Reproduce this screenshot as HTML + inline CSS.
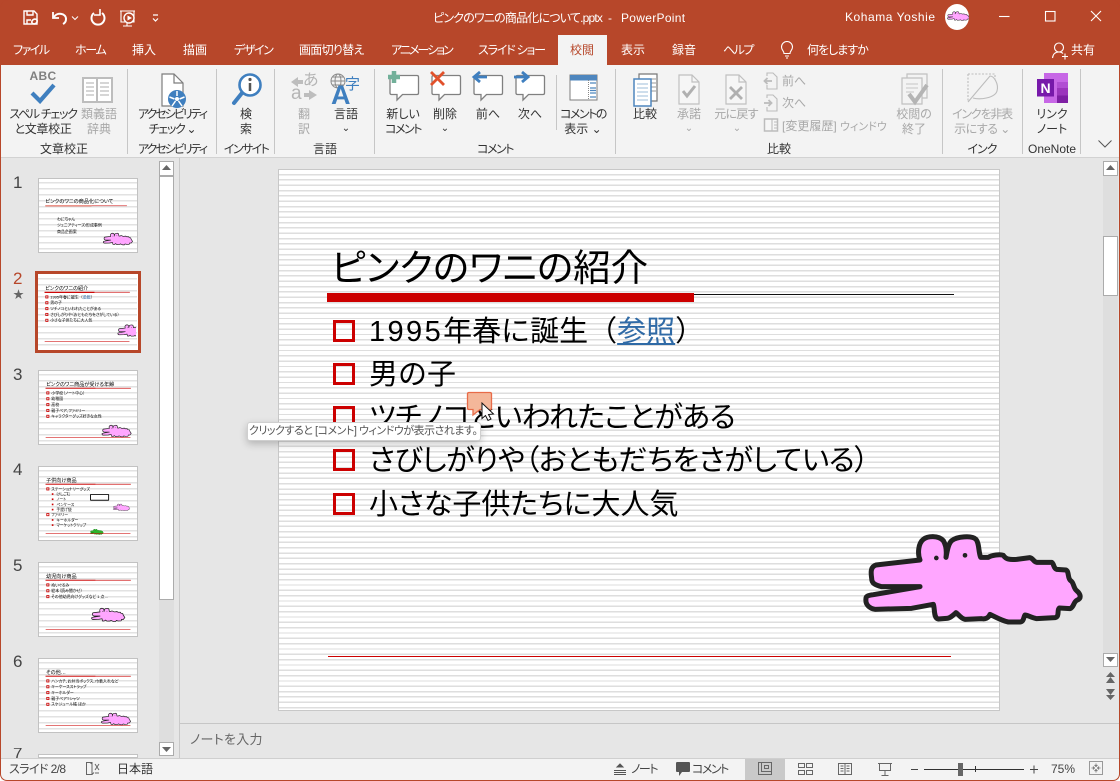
<!DOCTYPE html>
<html lang="ja"><head><meta charset="utf-8"><title>PowerPoint</title>
<style>
*{box-sizing:border-box;margin:0;padding:0}
html,body{width:1120px;height:781px;overflow:hidden;background:#fff}
body{font-family:"Liberation Sans","Noto Sans CJK JP",sans-serif;font-feature-settings:"palt";position:relative}
div,span,svg{position:absolute}
.t{white-space:nowrap;font-size:12px;line-height:14px;color:#333;transform:translateX(-50%)}
.l{white-space:nowrap;font-size:12px;line-height:14px;color:#333}
.g{color:#a8a8a8}
.w{color:#fff}
.sep{width:1px;top:69px;height:85px;background:#c6c6c6}
.sl{left:0;top:0;width:720px;height:540px;overflow:hidden;transform:scale(.1361);transform-origin:0 0;font-family:"Liberation Sans","Noto Sans CJK JP",sans-serif}
.th{left:38px;width:100px;height:75px;border:1px solid #c2c2c2;overflow:hidden;background:repeating-linear-gradient(#fff 0,#fff 3px,#e2e2e2 3px,#e2e2e2 4.5px,#fff 4.5px,#fff 6px)}
.th .b{border-width:6px}
.n{left:13px;font-size:17px;line-height:20px;color:#444}
.stripes{background:repeating-linear-gradient(#fff 0,#fff 3.9px,#dedede 3.9px,#dedede 5.33px)}
.ti{white-space:nowrap;font-size:37.500px;line-height:50px;color:#000;left:52px;margin-top:2px}
.bar{height:9px;background:#c00;left:48px;top:123px;width:367px}
.thin{height:1px;background:#111;left:415px;top:124px;width:260px}
.foot{height:1px;background:#c00;left:49px;top:486px;width:623px}
.i{white-space:nowrap;font-size:29px;line-height:40px;color:#000;left:90px;margin-top:1px}
.np{font-feature-settings:normal}
.b{left:54px;width:22px;height:22px;border:3.5px solid #c00}
.s{left:94px;width:12px;height:12px;background:#c00}
.i2{white-space:nowrap;font-size:28px;line-height:40px;color:#000;left:128px}
</style></head><body>
<svg width="0" height="0" style="position:absolute"><defs>
<path id="gp" d="M240 120C232 100 235 70 250 58C262 48 295 45 310 62C318 75 320 95 318 112C322 90 325 72 335 62C350 50 395 45 408 58C418 70 415 95 422 112L445 112C455 105 480 102 490 106C498 118 510 120 530 118L570 113C580 115 580 125 590 127L635 127C642 130 640 145 650 148L678 150C688 155 682 175 692 182C702 188 700 205 710 212C722 222 725 235 712 240C700 245 702 262 690 266L658 264C650 270 660 290 645 293L590 296C575 293 562 285 555 285C550 292 552 305 540 306L505 306C485 302 465 290 450 283C445 295 435 298 425 296L375 298C362 295 355 282 348 278C340 285 330 295 320 295L295 297C280 295 285 265 280 253L215 265L105 268C90 265 75 255 78 235C78 228 85 226 100 224L240 200L125 200C105 195 95 190 95 175C92 155 92 140 108 135Z"/>
<g id="gator"><use href="#gp" fill="#FFA6FF" stroke="#222" stroke-width="15" stroke-linejoin="round"/><circle cx="289" cy="114" r="7" fill="#222"/><circle cx="375" cy="106" r="7" fill="#222"/></g>
<g id="gr"><use href="#gp" fill="#2CB52C" stroke="#0a7a0a" stroke-width="20"/></g>
<path id="bub" d="M5.500 3.500H31C32 3.500 32.500 4 32.500 5V21C32.500 22 32 22.500 31 22.500H16.500L11 28V22.500H5.500C4.500 22.500 4 22 4 21V5C4 4 4.500 3.500 5.500 3.500Z" fill="#fff" stroke="#808080" stroke-width="1.300"/>
</defs></svg>

<!-- title + tabs -->
<div style="left:0;top:0;width:1120px;height:65px;background:#B7472A"></div>

<svg style="left:22px;top:9px" width="145" height="18" viewBox="0 0 145 18" fill="none" stroke="#fff" stroke-width="1.400">
<path d="M2 2H12L15 5V15H2Z"/><path d="M5 2V6H11V2M5 15V11H9"/><path d="M10 14a3 3 0 0 1 5-3M15 11a3 3 0 0 1-5 3" stroke-width="1.600"/>
<path d="M32 8C35 3 44 4 44 10C44 12 43 14 41 15" stroke-width="2"/><path d="M31 3V9H37" stroke-width="1.800"/>
<path d="M50 7.500l3 3 3-3" stroke-width="1"/>
<path d="M72 4A6.500 6.500 0 1 0 80 4" stroke-width="2"/><path d="M76 1V7H70" stroke-width="1.600" transform="translate(2 -1)"/>
<path d="M98 2H113M99 2V13H112V2M105 13V17M101 17H110" stroke-width="1.100"/><circle cx="107" cy="9" r="5" fill="#B7472A"/><path d="M105.500 6.500L110 9 105.500 11.500Z" fill="#fff" stroke="none"/>
<path d="M131 6H136M131 9.500L133.500 12 136 9.500" stroke-width="1.200"/>
</svg>

<div class="l w" style="left:433px;top:11px;letter-spacing:-.8px">ピンクのワニの商品化について.pptx</div>
<div class="l w" style="left:608px;top:11px">-</div>
<div class="l w" style="left:621px;top:11px;letter-spacing:.3px">PowerPoint</div>
<div class="l w" style="left:845px;top:10px;letter-spacing:.55px">Kohama Yoshie</div>
<div style="left:945px;top:4px;width:24px;height:26px;border-radius:50%;background:#fff;overflow:hidden"><svg style="left:1px;top:4px" width="24" height="16" viewBox="40 30 700 290"><use href="#gator"/></svg></div>
<svg style="left:995px;top:8px" width="115" height="18" fill="none" stroke="#fff" stroke-width="1.100"><path d="M4 8.500H14.500"/><rect x="50.500" y="3.500" width="9.500" height="9.500"/><path d="M96 3L106 13M106 3L96 13"/></svg>

<div class="l w" style="left:13px;top:43px;letter-spacing:-1.500px">ファイル</div>
<div class="l w" style="left:75px;top:43px;letter-spacing:-1.300px">ホーム</div>
<div class="l w" style="left:132px;top:43px">挿入</div>
<div class="l w" style="left:183px;top:43px">描画</div>
<div class="l w" style="left:234px;top:43px;letter-spacing:-1.400px">デザイン</div>
<div class="l w" style="left:299px;top:43px;letter-spacing:-.7px">画面切り替え</div>
<div class="l w" style="left:391px;top:43px;letter-spacing:-2px">アニメーション</div>
<div class="l w" style="left:478px;top:43px;letter-spacing:-1.200px">スライド ショー</div>
<div style="left:558px;top:35px;width:49px;height:31px;background:#F3F3F3"></div>
<div class="l" style="left:570px;top:43px;color:#B7472A">校閲</div>
<div class="l w" style="left:621px;top:43px">表示</div>
<div class="l w" style="left:672px;top:43px">録音</div>
<div class="l w" style="left:723px;top:43px;letter-spacing:-1.500px">ヘルプ</div>
<svg style="left:779px;top:41px" width="16" height="18" fill="none" stroke="#fff" stroke-width="1.100"><path d="M5 12.500C5 10 2.500 9 2.500 6a5.500 5.500 0 0 1 11 0C13.500 9 11 10 11 12.500ZM6 15H10M7 17H9"/></svg>
<div class="l w" style="left:807px;top:43px;letter-spacing:-1px">何をしますか</div>
<svg style="left:1051px;top:42px" width="20" height="18" fill="none" stroke="#fff" stroke-width="1.100"><circle cx="8" cy="5.500" r="4.500"/><path d="M1.500 16C2 12 4.500 10 8 10C9.500 10 11 10.500 12 11.500M11 14.500H17M14 11.500V17.500"/></svg>
<div class="l w" style="left:1071px;top:43px">共有</div>

<!-- ribbon -->
<div style="left:1px;top:65px;width:1118px;height:93px;background:#F3F3F3;border-bottom:1px solid #d2d2d2"></div>
<div class="sep" style="left:127px"></div><div class="sep" style="left:216px"></div><div class="sep" style="left:274px"></div><div class="sep" style="left:374px"></div><div class="sep" style="left:556px;top:75px;height:55px"></div><div class="sep" style="left:615px"></div><div class="sep" style="left:942px"></div><div class="sep" style="left:1022px"></div><div class="sep" style="left:1080px"></div>

<!-- ribbon icons -->
<div class="t" style="left:43px;top:69px;font-size:12px;font-weight:bold;color:#808080;letter-spacing:.3px">ABC</div>
<svg style="left:28px;top:82px" width="30" height="22" fill="none"><path d="M4 11L12 19L26 3" stroke="#3F7FBF" stroke-width="4.200"/></svg>
<svg style="left:81px;top:74px" width="34" height="32" fill="#fff" stroke="#bdbdbd" stroke-width="1.200"><path d="M2 4H16V28H2ZM16 4H31V28H16Z" stroke-width="2"/><path d="M5 9H13M5 13H13M5 17H13M5 21H13M19 9H28M19 13H28M19 17H28M19 21H28"/></svg>

<svg style="left:160px;top:72px" width="34" height="38" fill="none"><path d="M2 2H14L23 11V34H2Z" fill="#fff" stroke="#7d7d7d" stroke-width="1.200"/><path d="M14 2V11H23" stroke="#7d7d7d" stroke-width="1.200"/><circle cx="17" cy="27" r="9" fill="#3F7FBF"/><circle cx="17" cy="27" r="2" fill="#fff"/><path d="M17 19V24M9.500 25L14.500 27M24.500 25L19.500 27M12 34L15.500 29M22 34L18.500 29" stroke="#fff" stroke-width="1.500"/></svg>

<svg style="left:231px;top:72px" width="32" height="36" fill="none"><circle cx="19" cy="13" r="10.500" fill="#fff" stroke="#3F7FBF" stroke-width="2.600"/><path d="M11 21L3 31" stroke="#3F7FBF" stroke-width="4" stroke-linecap="round"/><path d="M19 11V19" stroke="#555" stroke-width="2.500"/><circle cx="19" cy="7.500" r="1.600" fill="#555"/></svg>

<svg style="left:289px;top:74px" width="30" height="32" fill="#bdbdbd"><path d="M2 8L9 3V6H14V10H9V13Z"/><path d="M28 21L20 16V19H15V23H20V26Z"/></svg>
<div class="l" style="left:303px;top:72px;font-size:16px;line-height:18px;color:#b5b5b5">あ</div>
<div class="l" style="left:291px;top:84px;font-size:19px;line-height:20px;color:#b5b5b5">a</div>

<svg style="left:330px;top:73px" width="16" height="16" fill="none" stroke="#8a8a8a" stroke-width="1"><circle cx="8" cy="8" r="7"/><ellipse cx="8" cy="8" rx="3" ry="7"/><path d="M1 8H15M2 4H14M2 12H14"/></svg>
<div class="l" style="left:331px;top:81px;font-size:27px;line-height:29px;font-weight:bold;color:#3F7FBF">A</div>
<div class="l" style="left:345px;top:76px;font-size:15px;line-height:17px;color:#3F7FBF">字</div>

<svg style="left:386px;top:72px;overflow:visible" width="170" height="36" viewBox="0 0 170 36">
<use href="#bub"/><use href="#bub" x="42"/><use href="#bub" x="84"/><use href="#bub" x="126"/>
<path d="M2 5H14M8 -1V11" stroke="#72B09A" stroke-width="4.500"/>
<path d="M45 0L58 13M58 0L45 13" stroke="#E1512B" stroke-width="2.800"/>
<path d="M101 5H89M94 0L88 5 94 10" fill="none" stroke="#3F7FBF" stroke-width="2.800"/>
<path d="M128 5H141M136 0L142 5 136 10" fill="none" stroke="#3F7FBF" stroke-width="2.800"/>
</svg>
<svg style="left:569px;top:74px" width="30" height="28" fill="none"><rect x="1" y="1" width="27" height="25" fill="#fff" stroke="#7d7d7d"/><rect x="1" y="1" width="27" height="5.500" fill="#4E86BE"/><path d="M19.500 6V26" stroke="#888" stroke-dasharray="1 1"/><path d="M21 9H27M21 14H27M21 16.500H27M21 19H27M21 23H27" stroke="#4E86BE" stroke-width="1.200"/></svg>

<svg style="left:632px;top:72px" width="28" height="36" fill="none"><path d="M7 2H25V29H7Z" fill="#fff" stroke="#777" stroke-width="1.200"/><path d="M18 7H24M18 11H24M18 15H24M18 19H24" stroke="#999"/><path d="M2 7H19V34H2Z" fill="#fff" stroke="#4E86BE" stroke-width="1.500"/><path d="M5 12H16M5 16H16M5 20H16M5 24H16M5 28H16" stroke="#9dbcd9"/></svg>
<svg style="left:677px;top:73px" width="24" height="34" fill="none" stroke="#c0c0c0" stroke-width="1.200"><path d="M2 2H15L22 9V31H2Z" fill="#f6f6f6"/><path d="M15 2V9H22"/><path d="M6 18L10 23L18 13" stroke="#b0b0b0" stroke-width="3"/></svg>
<svg style="left:724px;top:73px" width="24" height="34" fill="none" stroke="#c0c0c0" stroke-width="1.200"><path d="M2 2H15L22 9V31H2Z" fill="#f6f6f6"/><path d="M15 2V9H22"/><path d="M6 14L18 26M18 14L6 26" stroke="#b0b0b0" stroke-width="2.800"/></svg>
<svg style="left:763px;top:71px" width="16" height="64" fill="none" stroke="#bcbcbc" stroke-width="1.100"><path d="M4 5V2H10L14 6V18H4V14"/><path d="M9 10H2M4.500 7L1.500 10 4.500 13" stroke-width="1.800"/><path d="M4 27V24H10L14 28V40H4V36"/><path d="M1 32H8M5.500 29L8.500 32 5.500 35" stroke-width="1.800"/><rect x="1.500" y="48" width="13" height="12" fill="#f6f6f6" stroke-width="1.500"/><path d="M9 48V60M11 51H14M11 54H14M11 57H14"/></svg>
<div class="l g" style="left:782px;top:74px">前へ</div>
<div class="l g" style="left:782px;top:96px">次へ</div>
<div class="l g" style="left:782px;top:119px">[変更履歴] <span style="position:static;font-size:11px">ウィンドウ</span></div>
<svg style="left:900px;top:72px" width="30" height="36" fill="none" stroke="#c0c0c0" stroke-width="1.200"><path d="M7 2H27V26H7Z"/><path d="M2 6H22V32H2Z" fill="#f3f3f3"/><path d="M6 12H18M6 16H18M6 20H14" stroke="#cfcfcf"/><path d="M9 22L15 30L27 13" stroke="#b4b4b4" stroke-width="4"/></svg>
<svg style="left:966px;top:72px" width="34" height="34" fill="none" stroke="#bcbcbc" stroke-width="1.100"><path d="M2 2H29V8M2 2V30" stroke-dasharray="2 1.500"/><path d="M2 30L24 4C28 4 33 12 31 19C29 26 14 28 7 26"/></svg>
<svg style="left:1036px;top:72px" width="34" height="32"><rect x="8" y="1" width="24" height="30" fill="#C767E6"/><rect x="21" y="10" width="11" height="7" fill="#B14ED3"/><rect x="21" y="16" width="11" height="8" fill="#9B35BC"/><rect x="21" y="23.500" width="11" height="7.500" fill="#7E1FA3"/><rect x="1" y="7" width="17" height="17.500" fill="#7719AA"/><text x="9.500" y="21" fill="#fff" font-size="14" font-weight="bold" text-anchor="middle" font-family="Liberation Sans">N</text></svg>

<!-- ribbon labels -->
<div class="t" style="left:43px;top:107px;letter-spacing:-1.300px">スペル チェック</div><div class="t" style="left:43px;top:122px;letter-spacing:-.3px">と文章校正</div>
<div class="t g" style="left:99px;top:107px">類義語</div><div class="t g" style="left:99px;top:122px">辞典</div>
<div class="t" style="left:172px;top:107px;letter-spacing:-2px">アクセシビリティ</div><div class="t" style="left:172px;top:122px;letter-spacing:-1.300px">チェック ⌄</div>
<div class="t" style="left:246px;top:107px">検</div><div class="t" style="left:246px;top:122px">索</div>
<div class="t g" style="left:304px;top:107px">翻</div><div class="t g" style="left:304px;top:122px">訳</div>
<div class="t" style="left:346px;top:107px">言語</div><div class="t" style="left:346px;top:122px;font-size:10px">⌄</div>
<div class="t" style="left:403px;top:107px">新しい</div><div class="t" style="left:403px;top:122px;letter-spacing:-1.500px">コメント</div>
<div class="t" style="left:445px;top:107px">削除</div><div class="t" style="left:445px;top:122px;font-size:10px">⌄</div>
<div class="t" style="left:488px;top:107px">前へ</div>
<div class="t" style="left:530px;top:107px">次へ</div>
<div class="t" style="left:583px;top:107px;letter-spacing:-1.500px">コメントの</div><div class="t" style="left:583px;top:122px">表示 ⌄</div>
<div class="t" style="left:645px;top:107px">比較</div>
<div class="t g" style="left:689px;top:107px">承諾</div><div class="t g" style="left:689px;top:122px;font-size:10px">⌄</div>
<div class="t g" style="left:736px;top:107px;letter-spacing:-.7px">元に戻す</div><div class="t g" style="left:737px;top:122px;font-size:10px">⌄</div>
<div class="t g" style="left:914px;top:107px">校閲の</div><div class="t g" style="left:914px;top:122px">終了</div>
<div class="t g" style="left:982px;top:107px;letter-spacing:-1.200px">インクを非表</div><div class="t g" style="left:982px;top:122px;letter-spacing:-.5px">示にする ⌄</div>
<div class="t" style="left:1052px;top:107px">リンク</div><div class="t" style="left:1052px;top:122px">ノート</div>
<div class="t" style="left:64px;top:142px">文章校正</div>
<div class="t" style="left:172px;top:142px;letter-spacing:-2px">アクセシビリティ</div>
<div class="t" style="left:246px;top:142px;letter-spacing:-1.600px">インサイト</div>
<div class="t" style="left:325px;top:142px">言語</div>
<div class="t" style="left:495px;top:142px;letter-spacing:-1.500px">コメント</div>
<div class="t" style="left:779px;top:142px">比較</div>
<div class="t" style="left:982px;top:142px;letter-spacing:-1px">インク</div>
<div class="t" style="left:1052px;top:142px">OneNote</div>
<svg style="left:1097px;top:139px" width="16" height="10" fill="none" stroke="#555"><path d="M1.500 1.500L8 8L14.500 1.500"/></svg>

<!-- workspace -->
<div style="left:1px;top:158px;width:1118px;height:600px;background:#E6E6E6"></div>
<div style="left:179px;top:158px;width:1px;height:600px;background:#c9c9c9"></div>
<div style="left:180px;top:723px;width:939px;height:1px;background:#c6c6c6"></div>
<div class="l" style="left:190px;top:732px;font-size:13px;line-height:16px;color:#666;letter-spacing:.3px">ノートを入力</div>

<!-- thumbs -->
<div class="n" style="top:173px">1</div>
<div class="n" style="top:269px;color:#B7472A">2</div>
<div class="l" style="left:13px;top:288px;font-size:11px;color:#666">★</div>
<div class="n" style="top:365px">3</div>
<div class="n" style="top:460px">4</div>
<div class="n" style="top:556px">5</div>
<div class="n" style="top:652px">6</div>
<div style="left:1px;top:748px;width:158px;height:10px;overflow:hidden"><div class="n" style="top:0;left:12px;line-height:10px;height:10px;overflow:hidden;padding-top:1px">7</div><div class="th" style="top:6px;left:37px;height:4px"></div></div>

<div class="th" style="top:178px"><div class="sl">
<div class="ti" style="top:137px;font-size:38px;left:46px">ピンクのワニの商品化について</div>
<div class="bar" style="top:194px;left:46px;width:340px;height:7px;background:#E04C3C"></div><div class="bar" style="top:195px;left:386px;width:260px;height:4px;background:#c00"></div>
<div class="i" style="left:132px;top:275px">わにちゃん</div><div class="i" style="left:132px;top:320px">ジュニアティーズ/形成事例</div><div class="i" style="left:132px;top:365px">商品企画案</div>
<svg style="left:447px;top:382px;position:absolute" width="280" height="261" viewBox="0 0 840 783"><use href="#gator"/></svg>
</div></div>

<div style="left:35px;top:271px;width:106px;height:82px;border:3.5px solid #B7472A;background:#fff"></div>
<div class="th" style="top:275px;border:none;height:74px;width:99px"><div class="sl" style="top:0;left:0">
<div class="ti" style="top:71px">ピンクのワニの紹介</div><div class="bar"></div><div class="thin" style="height:5px;background:#c00"></div>
<div class="b" style="top:150px"></div><div class="i np" style="top:141px">1995年春に誕生（<span style="position:static;color:#2F6AA6;text-decoration:underline">参照</span>）</div>
<div class="b" style="top:193px"></div><div class="i" style="top:184px">男の子</div>
<div class="b" style="top:236px"></div><div class="i" style="top:227px">ツチノコといわれたことがある</div>
<div class="b" style="top:279px"></div><div class="i" style="top:270px">さびしがりや（おともだちをさがしている）</div>
<div class="b" style="top:322px"></div><div class="i" style="top:313px">小さな子供たちに大人気</div>
<svg style="left:561px;top:350px;position:absolute" width="280" height="261" viewBox="0 0 840 783"><use href="#gator"/></svg><div class="foot" style="height:4px"></div>
</div></div>

<div class="th" style="top:370px"><div class="sl">
<div class="ti" style="top:71px">ピンクのワニ商品が受ける年齢</div><div class="bar" style="height:7px"></div><div class="thin" style="height:5px;background:#c00"></div>
<div class="b" style="top:150px"></div><div class="i" style="top:141px">小学校（ノート中心）</div>
<div class="b" style="top:193px"></div><div class="i" style="top:184px">幼稚園</div>
<div class="b" style="top:236px"></div><div class="i" style="top:227px">高校</div>
<div class="b" style="top:279px"></div><div class="i" style="top:270px">親子ペア、ファミリー</div>
<div class="b" style="top:322px"></div><div class="i" style="top:313px">キャラクターグッズ好きな女性</div>
<svg style="left:437px;top:382px;position:absolute" width="280" height="261" viewBox="0 0 840 783"><use href="#gator"/></svg><div class="foot" style="height:4px"></div>
</div></div>

<div class="th" style="top:466px"><div class="sl">
<div class="ti" style="top:71px">子供向け商品</div><div class="bar" style="height:7px"></div><div class="thin" style="height:5px;background:#c00"></div>
<div class="b" style="top:150px"></div><div class="i" style="top:141px">ステーショナリーグッズ</div>
<div class="s" style="top:193px"></div><div class="i2" style="top:180px">けしごむ</div>
<div class="s" style="top:231px"></div><div class="i2" style="top:218px">ノート</div>
<div class="s" style="top:269px"></div><div class="i2" style="top:256px">ペンケース</div>
<div class="s" style="top:307px"></div><div class="i2" style="top:294px">手提げ袋</div>
<div class="b" style="top:339px"></div><div class="i" style="top:330px">ファミリー</div>
<div class="s" style="top:383px"></div><div class="i2" style="top:370px">キーホルダー</div>
<div class="s" style="top:421px"></div><div class="i2" style="top:408px">マーケットクリップ</div>
<div style="left:375px;top:198px;width:140px;height:50px;border:7px solid #111;background:#fff;border-radius:6px"></div>
<svg style="left:530px;top:263px;position:absolute" width="160" height="149" viewBox="0 0 840 783"><use href="#gator"/></svg>
<svg style="left:365px;top:450px;position:absolute" width="126" height="90" viewBox="0 0 840 600"><use href="#gr"/></svg><div class="foot" style="height:4px"></div>
</div></div>

<div class="th" style="top:562px"><div class="sl">
<div class="ti" style="top:71px">幼児向け商品</div><div class="bar" style="height:7px"></div><div class="thin" style="height:5px;background:#c00"></div>
<div class="b" style="top:150px"></div><div class="i" style="top:141px">ぬいぐるみ</div>
<div class="b" style="top:193px"></div><div class="i" style="top:184px">絵本（読み聞かせ）</div>
<div class="b" style="top:236px"></div><div class="i" style="top:227px">その他幼児向けグッズなど 1 点…</div>
<svg style="left:357px;top:314px;position:absolute" width="319" height="220" viewBox="0 0 840 580"><use href="#gator"/></svg><div class="foot" style="height:4px"></div>
</div></div>

<div class="th" style="top:658px"><div class="sl">
<div class="ti" style="top:71px">その他…</div><div class="bar" style="height:7px"></div><div class="thin" style="height:5px;background:#c00"></div>
<div class="b" style="top:150px"></div><div class="i" style="top:141px">ハンカチ、お弁当ボックス、巾着入れなど</div>
<div class="b" style="top:193px"></div><div class="i" style="top:184px">キーケースストラップ</div>
<div class="b" style="top:236px"></div><div class="i" style="top:227px">キーホルダー</div>
<div class="b" style="top:279px"></div><div class="i" style="top:270px">親子ペアTシャツ</div>
<div class="b" style="top:322px"></div><div class="i" style="top:313px">スケジュール帳 ほか</div>
<svg style="left:433px;top:382px;position:absolute" width="280" height="158" viewBox="0 0 840 474"><use href="#gator"/></svg><div class="foot" style="height:4px"></div>
</div></div>

<!-- thumb scrollbar -->
<div style="left:159px;top:161px;width:15px;height:594px;background:#DEDEDE"></div>
<div style="left:159px;top:161px;width:15px;height:15px;background:#fff;border:1px solid #ababab"></div>
<svg style="left:162px;top:165px" width="9" height="6"><path d="M0 5L4.500 0 9 5Z" fill="#666"/></svg>
<div style="left:159px;top:176px;width:15px;height:424px;background:#fff;border:1px solid #ababab"></div>
<div style="left:159px;top:742px;width:15px;height:14px;background:#fff;border:1px solid #ababab"></div>
<svg style="left:162px;top:747px" width="9" height="6"><path d="M0 0L4.500 5 9 0Z" fill="#666"/></svg>

<!-- main slide -->
<div class="stripes" style="left:278px;top:169px;width:722px;height:542px;border:1px solid #c8c8c8"></div>
<div style="left:279px;top:170px;width:720px;height:540px">
<div class="ti" style="top:71px">ピンクのワニの紹介</div>
<div class="bar"></div><div class="thin"></div><div class="foot"></div>
<div class="b" style="top:150px"></div><div class="i np" style="top:141px"><span style="position:static;letter-spacing:2.400px">1995</span>年春に誕生（<span style="position:static;color:#2F6AA6;text-decoration:underline">参照</span>）</div>
<div class="b" style="top:193px"></div><div class="i np" style="top:184px">男の子</div>
<div class="b" style="top:236px"></div><div class="i" style="top:227px;letter-spacing:-.5px">ツチノコといわれたことがある</div>
<div class="b" style="top:279px"></div><div class="i" style="top:270px;letter-spacing:-.4px">さびしがりや（おともだちをさがしている）</div>
<div class="b" style="top:323px"></div><div class="i" style="top:314px">小さな子供たちに大人気</div>
</div>
<svg style="left:840px;top:520px" width="280" height="261" viewBox="0 0 840 783"><use href="#gator"/></svg>

<!-- comment marker, cursor, tooltip -->
<svg style="left:466px;top:391px" width="30" height="32"><path d="M1.500 3C1.500 2 2 1.500 3 1.500H24C25 1.500 25.500 2 25.500 3V17C25.500 18 25 18.500 24 18.500H14L7 24V18.500H3C2 18.500 1.500 18 1.500 17Z" fill="#F4B79A" stroke="#E86B48" stroke-width="1.300"/><path d="M16 12L16 27.500 19.500 24.500 22 29.500 25 28 22.500 23.500 27.500 23Z" fill="#fff" stroke="#111" stroke-width="1"/></svg>
<div style="left:247px;top:422px;width:234px;height:19px;background:#fff;border:1px solid #cfcfcf;border-radius:3px;box-shadow:0 3px 8px rgba(0,0,0,.22)"></div>
<div class="l" style="left:249px;top:425px;font-size:11px;line-height:13px;color:#555;letter-spacing:-.5px">クリックすると [コメント] ウィンドウが表示されます。</div>

<!-- right scrollbar -->
<div style="left:1103px;top:161px;width:15px;height:506px;background:#DEDEDE"></div>
<div style="left:1103px;top:161px;width:15px;height:15px;background:#fff;border:1px solid #ababab"></div>
<svg style="left:1106px;top:165px" width="9" height="6"><path d="M0 5L4.500 0 9 5Z" fill="#666"/></svg>
<div style="left:1103px;top:236px;width:15px;height:60px;background:#fff;border:1px solid #ababab"></div>
<div style="left:1103px;top:653px;width:15px;height:14px;background:#fff;border:1px solid #ababab"></div>
<svg style="left:1106px;top:657px" width="9" height="6"><path d="M0 0L4.500 5 9 0Z" fill="#666"/></svg>
<svg style="left:1106px;top:672px" width="9" height="28" fill="#666"><path d="M0 5L4.500 0 9 5ZM0 11L4.500 5 9 11Z"/><path d="M0 17L4.500 23 9 17ZM0 23L4.500 28 9 23Z"/></svg>

<!-- status bar -->
<div style="left:1px;top:758px;width:1118px;height:22px;background:#F3F3F3;border-top:1px solid #cfcfcf"></div>
<div class="l" style="left:9px;top:762px;color:#444;letter-spacing:-.6px">スライド 2/8</div>
<svg style="left:85px;top:761px" width="16" height="15" fill="none" stroke="#666"><path d="M1.500 1.500H7V13.500H1.500ZM7 3L5 1.500M7 13.500L9 11.500"/><path d="M10 3L14 9M14 3L10 9M10 12H14"/></svg>
<div class="l" style="left:117px;top:762px;color:#333">日本語</div>
<svg style="left:613px;top:762px" width="14" height="14" fill="none" stroke="#555"><path d="M1 8.500H13M1 10.500H13M1 12.500H13"/><path d="M4 5L7 2 10 5Z" fill="#555"/></svg>
<div class="l" style="left:631px;top:762px;color:#444;letter-spacing:-1.500px">ノート</div>
<svg style="left:675px;top:761px" width="16" height="16"><path d="M1 2C1 1.500 1.500 1 2 1H14C14.500 1 15 1.500 15 2V10C15 10.500 14.500 11 14 11H7L4 15V11H2C1.500 11 1 10.500 1 10Z" fill="#555"/></svg>
<div class="l" style="left:692px;top:762px;color:#444;letter-spacing:-1.500px">コメント</div>
<div style="left:745px;top:759px;width:40px;height:21px;background:#C9C9C9"></div>
<svg style="left:757px;top:761px" width="140" height="16" fill="none" stroke="#666">
<path d="M1.500 1.500H14.500V13.500H1.500ZM4.500 1.500V10.500H14.500M7.500 4.500H11.500V7.500H7.500Z"/>
<path d="M41.500 2.500H47.500V6.500H41.500ZM49.500 2.500H55.500V6.500H49.500ZM41.500 9.500H47.500V13.500H41.500ZM49.500 9.500H55.500V13.500H49.500Z"/>
<path d="M81.500 2.500H94.500V13.500H81.500ZM88 2.500V13.500M83.500 5H86.500M83.500 7.500H86.500M83.500 10H86.500M89.500 5H92.500M89.500 7.500H92.500M89.500 10H92.500"/>
<path d="M121 2.500H135M122.500 3V9.500H133.500V3M128 9.500V14M124.500 14.500H131.500"/>
</svg>
<div style="left:911px;top:769px;width:7px;height:1px;background:#444"></div>
<div style="left:924px;top:769px;width:100px;height:1px;background:#333"></div>
<div style="left:958px;top:763px;width:5px;height:13px;background:#666"></div>
<div style="left:975px;top:766px;width:1px;height:6px;background:#333"></div>
<svg style="left:1030px;top:765px" width="9" height="9" stroke="#444"><path d="M0 4.500H8M4 .5V8.500"/></svg>
<div class="l" style="left:1051px;top:762px;color:#444">75%</div>
<svg style="left:1089px;top:761px" width="15" height="15" fill="none" stroke="#666"><rect x=".5" y=".5" width="13" height="13" stroke="#999"/><path d="M7 2.500V5M5.500 4L7 5.500 8.500 4M7 11.500V9M5.500 10L7 8.500 8.500 10M2.500 7H5M4 5.500L5.500 7 4 8.500M11.500 7H9M10 5.500L8.500 7 10 8.500" stroke-width=".8"/></svg>

<!-- window edge -->
<div style="left:0;top:0;width:1120px;height:781px;border:1px solid #B7472A;border-top:none;border-radius:8px 8px 7px 7px;clip-path:inset(0)"></div>
</body></html>
